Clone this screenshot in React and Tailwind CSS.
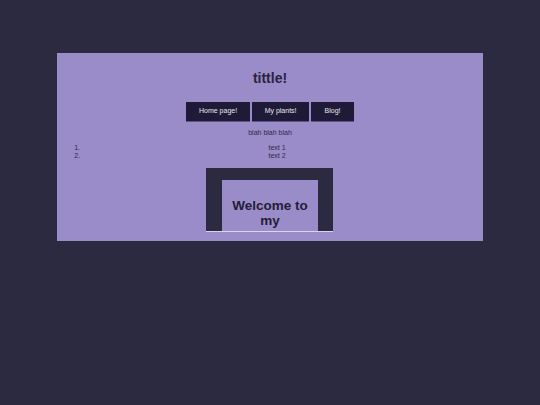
import React from 'react';

export default function App() {
  return (
    <div className="min-h-[405px] w-full bg-[#2c2a40] pt-[53px]" style={{ fontFamily: '"Liberation Sans", Arial, sans-serif' }}>
      <div className="w-[426px] h-[188px] ml-[57px] bg-[#9a8cc8] overflow-hidden text-[#2a2340]">
        {/* header */}
        <h1 className="text-center text-[14px] font-bold leading-[16px] pt-[17px]">tittle!</h1>

        {/* nav */}
        <div className="flex justify-center gap-[2px] mt-[16px]">
          <button className="h-[20px] px-[13px] bg-[#1f1a37] text-[#e8e6f2] text-[7px] border-b border-[#5c5480]">Home page!</button>
          <button className="h-[20px] px-[12.5px] bg-[#1f1a37] text-[#e8e6f2] text-[7px] border-b border-[#5c5480]">My plants!</button>
          <button className="h-[20px] px-[13.5px] bg-[#1f1a37] text-[#e8e6f2] text-[7px] border-b border-[#5c5480]">Blog!</button>
        </div>

        <p className="text-center text-[7px] leading-[8px] mt-[7px] text-[#2e2848]">blah blah blah</p>

        <ol className="list-decimal ml-[25px] mr-[11px] mt-[7px] text-center text-[7px] leading-[8px] text-[#2e2848]">
          <li>text 1</li>
          <li>text 2</li>
        </ol>

        {/* welcome box */}
        <div className="mt-[8px] ml-[149px] w-[127px] h-[64px] bg-[#2c2a40] pt-[12px] pl-[16px] pr-[15px] overflow-hidden border-b border-[#d9d4ec]">
          <div className="h-[80px] bg-[#9a8cc8] pt-[18px]">
            <h2 className="text-center text-[13.5px] font-bold leading-[15px] text-[#241d3a]">Welcome to my</h2>
          </div>
        </div>
      </div>
    </div>
  );
}
